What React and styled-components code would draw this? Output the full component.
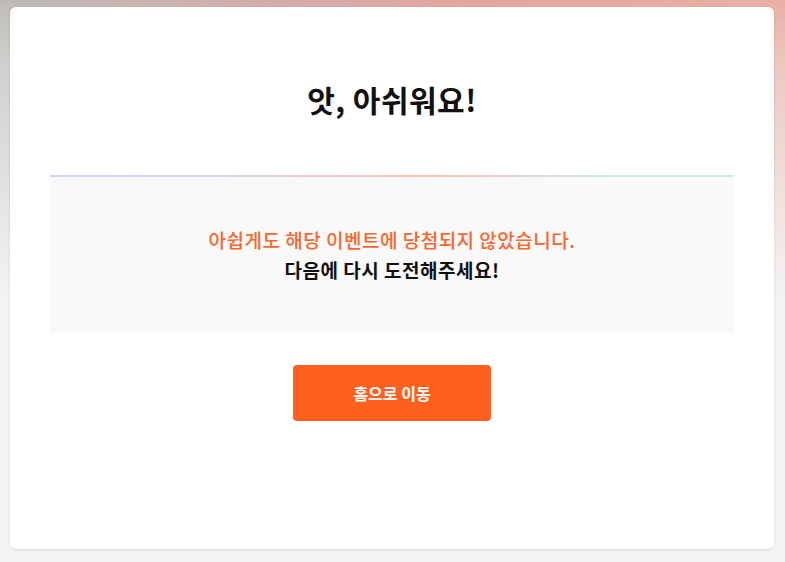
import React from "react";
import styled, { createGlobalStyle } from "styled-components";

const GlobalStyle = createGlobalStyle`
  html, body {
    margin: 0;
    padding: 0;
  }
  body {
    width: 785px;
    height: 562px;
    overflow: hidden;
    font-family: "Noto Sans CJK KR", "Noto Sans", sans-serif;
    background:
      linear-gradient(to bottom, rgba(244,244,244,0) 0px, rgba(244,244,244,0.35) 60px, #f4f4f4 300px),
      linear-gradient(to right, #bdbab7 0%, #d6a9a6 40%, #e4a49c 60%, #e9afa2 100%);
  }
`;

const Page = styled.div`
  padding: 7px 11px 0 10px;
`;

const Card = styled.main`
  height: 542px;
  box-sizing: border-box;
  background: #fff;
  border-radius: 6px;
  box-shadow: 0 1px 3px rgba(0, 0, 0, 0.12);
  padding: 73px 40px 0;
  display: flex;
  flex-direction: column;
  align-items: stretch;
`;

const Title = styled.h1`
  margin: 0;
  font-size: 30px;
  line-height: 39px;
  font-weight: 700;
  color: #111;
  text-align: center;
  letter-spacing: 0.5px;
`;

const Notice = styled.section`
  margin-top: 56px;
  border-top: 2px solid transparent;
  border-image: linear-gradient(to right, #cddbf1 0%, #d9d6ea 25%, #f6c0b6 55%, #dcdcd6 72%, #c3f0ee 88%, #c3f0ee 100%) 1;
  background: #f9f9f9;
  padding: 48px 20px 48px;
  text-align: center;
`;

const Line = styled.p`
  margin: 0;
  font-size: 19px;
  line-height: 30px;
  font-weight: ${(p) => (p.$accent ? 500 : 600)};
  color: ${(p) => (p.$accent ? "#ff6428" : "#111")};
  letter-spacing: 0.5px;
`;

const Actions = styled.div`
  display: flex;
  justify-content: center;
  margin-top: 32px;
`;

const HomeButton = styled.button`
  width: 198px;
  height: 56px;
  border: none;
  border-radius: 4px;
  background: #ff5f1f;
  color: #fff;
  font-family: "Noto Sans CJK KR", "Noto Sans", sans-serif;
  font-size: 16px;
  font-weight: 700;
  cursor: pointer;
`;

export default function App() {
  return (
    <>
      <GlobalStyle />
      <Page>
        <Card>
          <Title>앗, 아쉬워요!</Title>
          <Notice>
            <Line $accent>아쉽게도 해당 이벤트에 당첨되지 않았습니다.</Line>
            <Line>다음에 다시 도전해주세요!</Line>
          </Notice>
          <Actions>
            <HomeButton>홈으로 이동</HomeButton>
          </Actions>
        </Card>
      </Page>
    </>
  );
}
